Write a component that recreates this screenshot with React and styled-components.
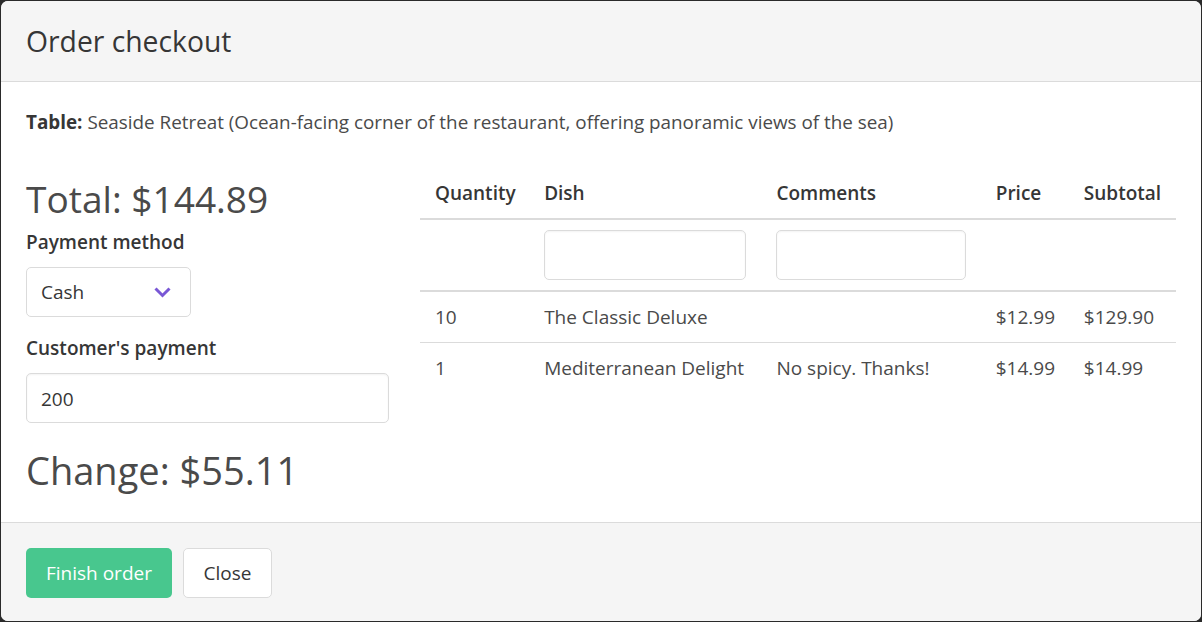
import React from "react";
import styled, { createGlobalStyle } from "styled-components";

const Global = createGlobalStyle`
  html, body { margin: 0; padding: 0; background: #2a2a2a; overflow: hidden; }
  body { font-family: "Open Sans", "Noto Sans", sans-serif; color: #4a4a4a; }
  * { box-sizing: border-box; }
`;

const Backdrop = styled.div`
  width: 1202px;
  height: 622px;
  padding: 1px 1px 0 1px;
`;

const Card = styled.div`
  width: 1200px;
  height: 620px;
  background: #fff;
  border-radius: 7px;
  overflow: hidden;
  display: flex;
  flex-direction: column;
`;

const Head = styled.header`
  background: #f5f5f5;
  border-bottom: 1px solid #dbdbdb;
  padding: 25px 25px;
  height: 81px;
`;

const Title = styled.h1`
  margin: 0;
  font-size: 28.3px;
  font-weight: 400;
  line-height: 30px;
  color: #363636;
`;

const Body = styled.section`
  flex: 1;
  padding: 25px 25px 29px;
`;

const Info = styled.p`
  margin: 0;
  font-size: 18.85px;
  line-height: 30px;
  strong { font-weight: 700; color: #363636; }
`;

const Columns = styled.div`
  display: grid;
  grid-template-columns: 363px 1fr;
  align-items: start;
  column-gap: 31px;
  margin-top: 31px;
`;

const LeftCol = styled.div`
  display: flex;
  flex-direction: column;
  align-items: flex-start;
`;

const BigAmount = styled.div`
  font-size: ${(p) => p.$size}px;
  line-height: 45px;
  color: #4a4a4a;
  margin-top: ${(p) => p.$top}px;
`;

const Label = styled.label`
  display: block;
  font-size: 19px;
  font-weight: 600;
  line-height: 30px;
  color: #363636;
  margin-top: ${(p) => p.$top}px;
`;

const SelectWrap = styled.div`
  position: relative;
  width: 165px;
  height: 50px;
  margin-top: 10px;
  border: 1px solid #dbdbdb;
  border-radius: 5px;
  background: #fff;
`;

const SelectValue = styled.div`
  padding-left: 14px;
  font-size: 19px;
  line-height: 48px;
  color: #363636;
`;

const Chevron = styled.svg`
  position: absolute;
  right: 19px;
  top: 19px;
  width: 17px;
  height: 11px;
`;

const TextInput = styled.div`
  width: 100%;
  height: 50px;
  margin-top: ${(p) => p.$top || 0}px;
  border: 1px solid #dbdbdb;
  border-radius: 5px;
  background: #fff;
  box-shadow: inset 0 1px 2px rgba(10, 10, 10, 0.05);
  padding-left: 14px;
  font-size: 19px;
  line-height: 50px;
  color: #363636;
`;

const Table = styled.table`
  width: 100%;
  border-collapse: collapse;
  table-layout: fixed;
  font-size: 19px;
  line-height: 30px;
`;

const Th = styled.th`
  text-align: left;
  font-weight: 600;
  color: #363636;
  padding: 10px 15px;
  border-bottom: 2px solid #dbdbdb;
`;

const FilterCell = styled.td`
  padding: 10px 15px;
  border-bottom: 2px solid #dbdbdb;
`;

const Td = styled.td`
  padding: 10px 15px;
  color: #4a4a4a;
  white-space: nowrap;
  border-bottom: ${(p) => (p.$last ? "0" : "1px solid #dbdbdb")};
`;

const Foot = styled.footer`
  background: #f5f5f5;
  border-top: 1px solid #dbdbdb;
  padding: 25px 25px 23px;
  display: flex;
  gap: 11px;
`;

const Button = styled.button`
  height: 50px;
  padding: 0 ${(p) => p.$px}px;
  border-radius: 5px;
  font-family: inherit;
  font-size: 19px;
  line-height: 48px;
  cursor: pointer;
  border: 1px solid ${(p) => (p.$primary ? "transparent" : "#dbdbdb")};
  background: ${(p) => (p.$primary ? "#48c78e" : "#fff")};
  color: ${(p) => (p.$primary ? "#fff" : "#363636")};
`;

const rows = [
  { qty: 10, dish: "The Classic Deluxe", comments: "", price: "$12.99", subtotal: "$129.90" },
  { qty: 1, dish: "Mediterranean Delight", comments: "No spicy. Thanks!", price: "$14.99", subtotal: "$14.99" },
];

export default function App() {
  return (
    <>
      <Global />
      <Backdrop>
        <Card>
          <Head>
            <Title>Order checkout</Title>
          </Head>
          <Body>
            <Info>
              <strong>Table:</strong> Seaside Retreat (Ocean-facing corner of the restaurant, offering panoramic views of the sea)
            </Info>
            <Columns>
              <LeftCol>
                <BigAmount $top={8} $size={37.1}>Total: $144.89</BigAmount>
                <Label $top={6}>Payment method</Label>
                <SelectWrap>
                  <SelectValue>Cash</SelectValue>
                  <Chevron viewBox="0 0 17 11">
                    <polyline points="1.5,1.5 8.5,8.5 15.5,1.5" fill="none" stroke="#7957d5" strokeWidth="3" />
                  </Chevron>
                </SelectWrap>
                <Label $top={16}>Customer's payment</Label>
                <TextInput $top={10}>200</TextInput>
                <BigAmount $top={25} $size={38}>Change: $55.11</BigAmount>
              </LeftCol>
              <Table>
                <colgroup>
                  <col style={{ width: 109 }} />
                  <col style={{ width: 232 }} />
                  <col style={{ width: 219 }} />
                  <col style={{ width: 88 }} />
                  <col style={{ width: 107 }} />
                </colgroup>
                <thead>
                  <tr>
                    <Th>Quantity</Th>
                    <Th>Dish</Th>
                    <Th>Comments</Th>
                    <Th>Price</Th>
                    <Th>Subtotal</Th>
                  </tr>
                </thead>
                <tbody>
                  <tr>
                    <FilterCell />
                    <FilterCell>
                      <TextInput />
                    </FilterCell>
                    <FilterCell>
                      <TextInput />
                    </FilterCell>
                    <FilterCell />
                    <FilterCell />
                  </tr>
                  {rows.map((r, i) => (
                    <tr key={i}>
                      <Td $last={i === rows.length - 1}>{r.qty}</Td>
                      <Td $last={i === rows.length - 1}>{r.dish}</Td>
                      <Td $last={i === rows.length - 1}>{r.comments}</Td>
                      <Td $last={i === rows.length - 1}>{r.price}</Td>
                      <Td $last={i === rows.length - 1}>{r.subtotal}</Td>
                    </tr>
                  ))}
                </tbody>
              </Table>
            </Columns>
          </Body>
          <Foot>
            <Button $primary $px={19}>Finish order</Button>
            <Button $px={19.5}>Close</Button>
          </Foot>
        </Card>
      </Backdrop>
    </>
  );
}
